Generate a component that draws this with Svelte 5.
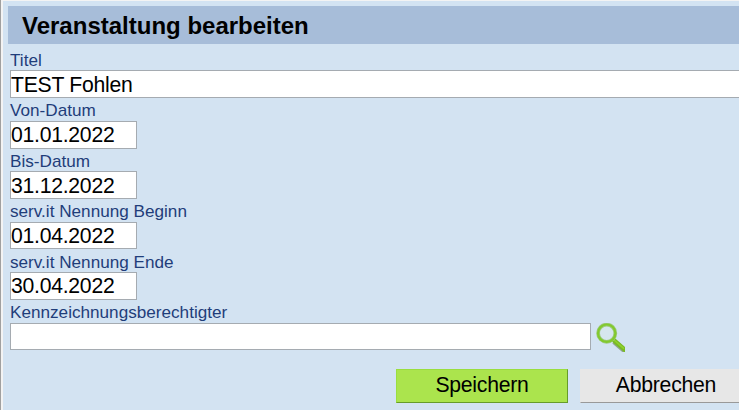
<script lang="ts">
    type Field = {
        id: string;
        label: string;
        value: string;
        size: string;
    }

    let fields: Field[] = $state([
        { id: "titel", label: "Titel", value: "TEST Fohlen", size: "full" },
        { id: "von", label: "Von-Datum", value: "01.01.2022", size: "date" },
        { id: "bis", label: "Bis-Datum", value: "31.12.2022", size: "date" },
        { id: "beginn", label: "serv.it Nennung Beginn", value: "01.04.2022", size: "date" },
        { id: "ende", label: "serv.it Nennung Ende", value: "30.04.2022", size: "date" },
        { id: "person", label: "Kennzeichnungsberechtigter", value: "", size: "lookup" },
    ]);
</script>

<form class="dialog" onsubmit={(e) => e.preventDefault()}>
    <h1>Veranstaltung bearbeiten</h1>

    <div class="fields">
        {#each fields as field (field.id)}
            <div class="field">
                <label for={field.id}>{field.label}</label>
                <div class="control">
                    <input id={field.id} class={field.size} type="text" spellcheck="false" bind:value={field.value} />
                    {#if field.size === "lookup"}
                        <button class="search" type="button" aria-label="Suchen">
                            <svg width="29" height="29" viewBox="0 0 29 29">
                                <path d="M18 18.5L30 29" stroke="#8fa48c" stroke-width="5" />
                                <path d="M17 16.5L30 27.8" stroke="#78bb22" stroke-width="4.4" />
                                <path d="M18 17L28 25.6" stroke="#90d030" stroke-width="1.6" />
                                <circle cx="10.7" cy="10.2" r="8.6" fill="#d6e6ee" stroke="#9ccb7c" stroke-width="3.8" />
                                <circle cx="10.7" cy="10.2" r="8.7" fill="none" stroke="#83c92f" stroke-width="2.2" />
                            </svg>
                        </button>
                    {/if}
                </div>
            </div>
        {/each}
    </div>

    <div class="actions">
        <button class="save" type="submit">Speichern</button>
        <button class="cancel" type="button">Abbrechen</button>
    </div>
</form>

<style>
    :global(body) {
        margin: 0;
        overflow: hidden;
    }

    .dialog {
        box-sizing: border-box;
        width: 760px;
        height: 410px;
        padding: 5px 0 0 5px;
        border-top: 1px solid #f3f3f3;
        border-left: 2px solid #f3f3f3;
        margin-left: 1px;
        box-shadow: -1px 0 0 #a0a0a0;
        background: #d3e3f2;
        color: #000;
        font-family: "Liberation Sans", Arial, sans-serif;
    }

    h1 {
        height: 38px;
        margin: 0;
        padding-left: 14px;
        background: #a7bdd9;
        font-size: 24px;
        line-height: 39px;
    }

    .fields {
        padding: 3.8125px 0 0 2px;
    }

    .field {
        height: 50.4375px;
    }

    label {
        display: block;
        height: 22.625px;
        color: #1f3d7a;
        font-size: 17.15px;
        line-height: 25.25px;
    }

    .control {
        display: flex;
        gap: 5px;
    }

    input {
        box-sizing: border-box;
        height: 27.6875px;
        padding: 0.8px 0 0;
        border: 1px solid #a5abb1;
        background: #fff;
        color: #000;
        font: 21.2px "Liberation Sans", Arial, sans-serif;
        letter-spacing: -0.26px;
        outline: none;
    }

    .full {
        width: 750px;
    }

    .date {
        width: 127px;
    }

    .lookup {
        width: 581px;
    }

    .search {
        height: 29px;
        padding: 0;
        border: 0;
        background: none;
    }

    .search svg {
        display: block;
    }

    .actions {
        display: flex;
        gap: 12px;
        padding: 18.4px 0 0 388px;
    }

    .actions button {
        box-sizing: border-box;
        width: 172px;
        height: 34px;
        padding: 0 0 1px;
        border: 1px solid;
        color: #000;
        font: 21.2px "Liberation Sans", Arial, sans-serif;
        letter-spacing: -0.24px;
    }

    .actions .save {
        border-color: #9ade3f #669c2a #669c2a #9ade3f;
        background: #abe44d;
    }

    .actions .cancel {
        border-color: #e7e7e7 #999 #999 #e7e7e7;
        background: #e7e7e7;
    }
</style>
